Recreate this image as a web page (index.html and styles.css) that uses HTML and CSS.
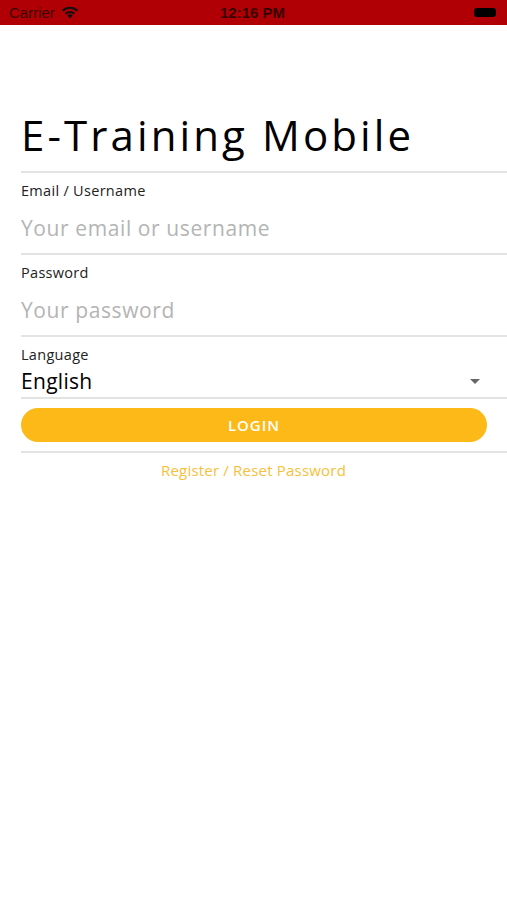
FILE: index.html
```html
<!DOCTYPE html>
<html lang="en">
<head>
    <meta charset="UTF-8">
    <meta name="viewport" content="width=device-width, initial-scale=1.0">
    <title>E-Training Mobile</title>
    <link rel="stylesheet" href="styles.css">
</head>
<body>
    <div class="statusbar">
        <div class="status-left">
            <span>Carrier</span>
            <svg class="wifi" width="18" height="13" viewBox="0 0 18 13">
                <path d="M9 12.5 L6.3 9.6 A4 4 0 0 1 11.7 9.6 Z" fill="#111"/>
                <path d="M4.6 7.8 A6.5 6.5 0 0 1 13.4 7.8" stroke="#111" stroke-width="2.2" fill="none"/>
                <path d="M1.6 4.8 A10.5 10.5 0 0 1 16.4 4.8" stroke="#111" stroke-width="2.2" fill="none"/>
            </svg>
        </div>
        <span class="time">12:16 PM</span>
        <div class="status-right">
            <div class="battery"></div>
        </div>
    </div>

    <div class="content">
        <h1 class="title">E-Training Mobile</h1>

        <div class="field">
            <label>Email / Username</label>
            <div class="placeholder">Your email or username</div>
        </div>

        <div class="field">
            <label>Password</label>
            <div class="placeholder">Your password</div>
        </div>

        <div class="field select">
            <label>Language</label>
            <div class="select-row">
                <span class="value">English</span>
                <span class="caret"></span>
            </div>
        </div>

        <button class="login">LOGIN</button>

        <div class="links">
            <a href="#">Register / Reset Password</a>
        </div>
    </div>
</body>
</html>
```

FILE: styles.css
```css
body {
    margin: 0;
    padding: 0;
    background: #fff;
    font-family: "Open Sans", Arial, sans-serif;
    color: #111;
}
.statusbar {
    height: 25px;
    background: #b10005;
    display: flex;
    align-items: center;
    justify-content: space-between;
    padding: 0 11px 0 9px;
    font-family: "Liberation Sans", Arial, sans-serif;
    font-size: 15px;
    color: #3a0000;
    box-sizing: border-box;
}
.status-left {
    display: flex;
    align-items: center;
    gap: 6px;
    width: 120px;
}
.time {
    font-weight: bold;
}
.status-right {
    width: 120px;
    display: flex;
    justify-content: flex-end;
}
.battery {
    width: 22px;
    height: 9px;
    background: #000;
    border-radius: 3px;
}
.content {
    padding-left: 21px;
    padding-top: 76px;
}
.title {
    margin: 0;
    font-size: 42px;
    font-weight: normal;
    line-height: 68px;
    padding-bottom: 2px;
    letter-spacing: 3.1px;
    color: #000;
    border-bottom: 2px solid #e3e3e3;
}
.field {
    border-bottom: 2px solid #e3e3e3;
    height: 82px;
    box-sizing: border-box;
    padding-top: 9px;
}
.field label {
    display: block;
    font-size: 14.5px;
    line-height: 18px;
    letter-spacing: 0.3px;
    color: #222;
}
.placeholder {
    font-size: 21px;
    line-height: 24px;
    margin-top: 16px;
    letter-spacing: 0.6px;
    color: #b4b4b4;
}
.field.select {
    height: 62px;
}
.select-row {
    display: flex;
    align-items: center;
    justify-content: space-between;
    padding-right: 27px;
    margin-top: 4px;
}
.value {
    font-size: 21px;
    line-height: 26px;
    letter-spacing: 0.3px;
    color: #000;
}
.caret {
    width: 0;
    height: 0;
    border-left: 5px solid transparent;
    border-right: 5px solid transparent;
    border-top: 5px solid #666;
}
.login {
    display: block;
    width: 466px;
    height: 34px;
    margin-top: 9px;
    border: none;
    border-radius: 17px;
    background: #fcb917;
    color: #fff;
    font-family: inherit;
    font-size: 15px;
    font-weight: 600;
    letter-spacing: 1px;
}
.links {
    margin-top: 9px;
    border-top: 2px solid #e3e3e3;
    padding-top: 6px;
    padding-right: 21px;
    text-align: center;
}
.links a {
    color: #f7c03a;
    font-size: 15px;
    letter-spacing: 0.2px;
    text-decoration: none;
}
```
